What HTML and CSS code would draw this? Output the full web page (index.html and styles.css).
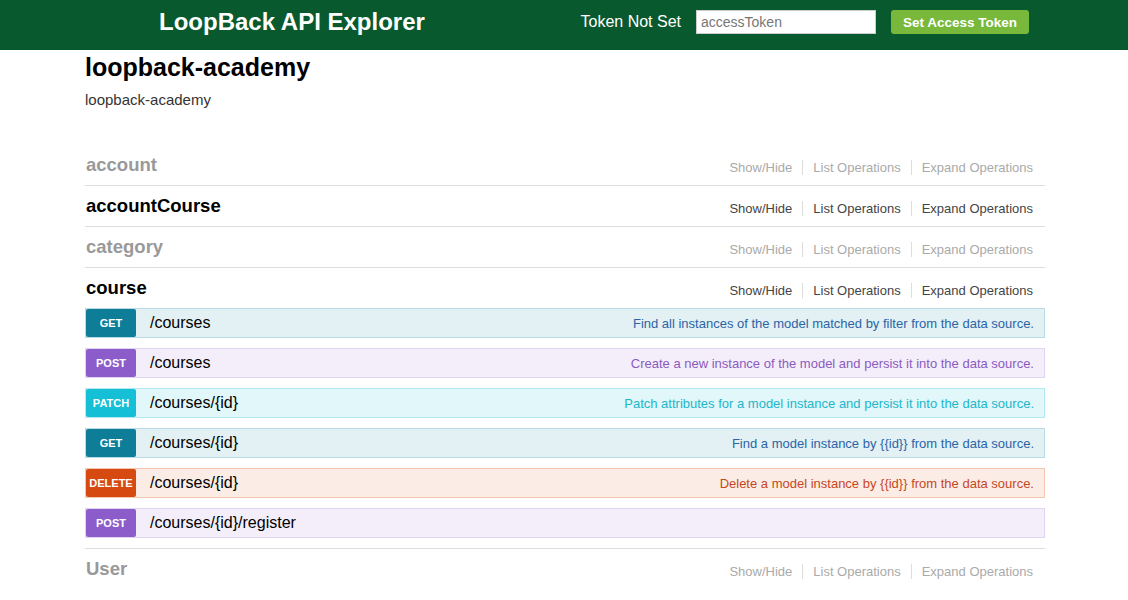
FILE: index.html
```html
<!DOCTYPE html>
<html lang="en">
<head>
<meta charset="utf-8">
<title>LoopBack API Explorer</title>
<link rel="stylesheet" href="styles.css">
</head>
<body>
<header class="topbar">
  <div class="wrap topbar-inner">
    <h1 class="brand">LoopBack API Explorer</h1>
    <form class="token-form">
      <span class="token-status">Token Not Set</span>
      <input class="token-input" type="text" placeholder="accessToken">
      <button class="token-btn" type="button">Set Access Token</button>
    </form>
  </div>
</header>
<main class="wrap">
  <div class="info">
    <h2 class="api-title">loopback-academy</h2>
    <p class="api-desc">loopback-academy</p>
  </div>
  <ul class="resources">
    <li class="resource muted">
      <div class="heading">
        <h3 class="res-name">account</h3>
        <ul class="options"><li>Show/Hide</li><li>List Operations</li><li>Expand Operations</li></ul>
      </div>
    </li>
    <li class="resource">
      <div class="heading">
        <h3 class="res-name">accountCourse</h3>
        <ul class="options"><li>Show/Hide</li><li>List Operations</li><li>Expand Operations</li></ul>
      </div>
    </li>
    <li class="resource muted">
      <div class="heading">
        <h3 class="res-name">category</h3>
        <ul class="options"><li>Show/Hide</li><li>List Operations</li><li>Expand Operations</li></ul>
      </div>
    </li>
    <li class="resource open">
      <div class="heading">
        <h3 class="res-name">course</h3>
        <ul class="options"><li>Show/Hide</li><li>List Operations</li><li>Expand Operations</li></ul>
      </div>
      <ul class="ops">
        <li class="op op-get"><span class="method">GET</span><span class="path">/courses</span><span class="summary">Find all instances of the model matched by filter from the data source.</span></li>
        <li class="op op-post"><span class="method">POST</span><span class="path">/courses</span><span class="summary">Create a new instance of the model and persist it into the data source.</span></li>
        <li class="op op-patch"><span class="method">PATCH</span><span class="path">/courses/{id}</span><span class="summary">Patch attributes for a model instance and persist it into the data source.</span></li>
        <li class="op op-get"><span class="method">GET</span><span class="path">/courses/{id}</span><span class="summary">Find a model instance by {{id}} from the data source.</span></li>
        <li class="op op-delete"><span class="method">DELETE</span><span class="path">/courses/{id}</span><span class="summary">Delete a model instance by {{id}} from the data source.</span></li>
        <li class="op op-post"><span class="method">POST</span><span class="path">/courses/{id}/register</span><span class="summary"></span></li>
      </ul>
    </li>
    <li class="resource muted">
      <div class="heading">
        <h3 class="res-name">User</h3>
        <ul class="options"><li>Show/Hide</li><li>List Operations</li><li>Expand Operations</li></ul>
      </div>
    </li>
  </ul>
</main>
</body>
</html>
```
FILE: styles.css
```css
* { box-sizing: border-box; }
html, body { margin: 0; padding: 0; }
body {
  font-family: "Liberation Sans", Arial, sans-serif;
  background: #fff;
  color: #000;
}
.wrap { width: 960px; margin: 0 0 0 calc(50% - 479px); }

.topbar { background: #08592e; height: 50px; }
.topbar-inner {
  height: 50px;
  display: flex;
  align-items: center;
  justify-content: space-between;
  padding: 0 16px 6px 74px;
}
.brand {
  margin: 0;
  font-size: 24px;
  font-weight: bold;
  color: #fff;
  line-height: 28px;
}
.token-form { display: flex; align-items: center; }
.token-status { color: #fff; font-size: 16px; margin-right: 15px; }
.token-input {
  width: 180px;
  height: 24px;
  border: 1px solid #ccc;
  padding: 0 4px;
  font-family: "Liberation Sans", Arial, sans-serif;
  font-size: 14px;
  color: #333;
  margin: 0 15px 0 0;
  outline: none;
}
.token-input::placeholder { color: #777; }
.token-btn {
  height: 24px;
  width: 138px;
  border: 0;
  border-radius: 3px;
  background: #78b83a;
  color: #fff;
  font-family: "Liberation Sans", Arial, sans-serif;
  font-weight: bold;
  font-size: 13.5px;
  padding: 0;
}

.info { padding-top: 2px; }
.api-title {
  margin: 0;
  font-size: 25px;
  line-height: 30px;
  font-weight: bold;
}
.api-desc {
  margin: 9px 0 0;
  font-size: 15px;
  line-height: 18px;
  color: #333;
}

.resources { list-style: none; margin: 36px 0 0; padding: 0; }
.resource { border-bottom: 1px solid #ddd; }
.resource:last-child { border-bottom: 0; }
.heading {
  height: 40px;
  display: flex;
  align-items: center;
  justify-content: space-between;
}
.res-name {
  margin: 0;
  font-size: 18.5px;
  font-weight: bold;
  color: #000;
  padding-left: 1px;
}
.muted .res-name { color: #999; }
.options {
  list-style: none;
  margin: 0;
  padding: 0 2px 0 0;
  display: flex;
  position: relative;
  top: 2px;
}
.options li {
  font-size: 13px;
  color: #444;
  padding: 0 10px;
  border-left: 1px solid #ddd;
  line-height: 15px;
}
.options li:first-child { border-left: 0; }
.muted .options li { color: #aaa; }

.ops { list-style: none; margin: 0; padding: 0 0 10px; }
.op {
  height: 30px;
  margin-bottom: 10px;
  border: 1px solid;
  display: flex;
  align-items: center;
}
.op:last-child { margin-bottom: 0; }
.method {
  width: 50px;
  height: 28px;
  border-radius: 2px;
  color: #fff;
  font-size: 11px;
  font-weight: bold;
  display: flex;
  align-items: center;
  justify-content: center;
  flex: none;
}
.path {
  margin-left: 14px;
  font-size: 16px;
  color: #000;
}
.summary {
  margin-left: auto;
  padding-right: 10px;
  font-size: 13px;
}

.op-get { background: #e3f0f4; border-color: #b9dbe5; }
.op-get .method { background: #0e7d98; }
.op-get .summary { color: #2b65a6; }

.op-post { background: #f4eefb; border-color: #e1d4f1; }
.op-post .method { background: #8c5dca; }
.op-post .summary { color: #8b5bbf; }

.op-patch { background: #e1f7fa; border-color: #b3e9f0; }
.op-patch .method { background: #15bfd5; }
.op-patch .summary { color: #22b6ca; }

.op-delete { background: #fbede6; border-color: #f3c6b0; }
.op-delete .method { background: #d64a12; }
.op-delete .summary { color: #c7471d; }
```
